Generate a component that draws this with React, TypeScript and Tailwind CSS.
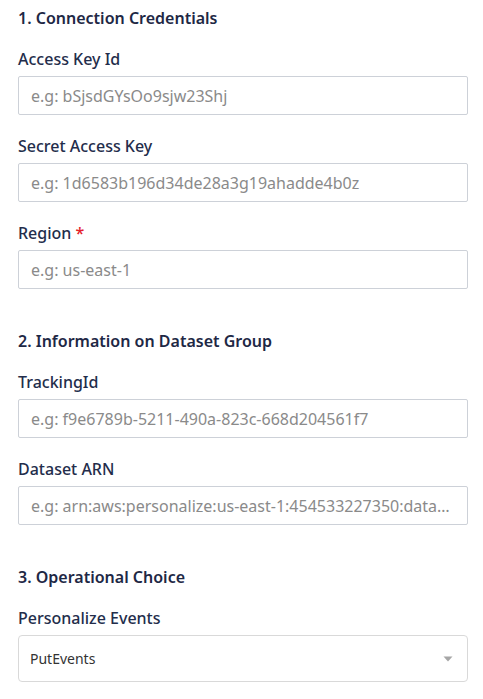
import React from "react";

const font = { fontFamily: '"Noto Sans", "Open Sans", sans-serif' };

function Field({ label, placeholder, required }: { label: string; placeholder: string; required?: boolean }) {
  return (
    <div className="flex flex-col">
      <label className="text-[16px] leading-[24px] font-medium text-[#232d4b] mb-[5px]">
        {label}
        {required && <span className="text-[#e4202a]"> *</span>}
      </label>
      <input
        className="h-[39px] w-full border border-[#cdd1d8] rounded-[2px] pl-[12px] pr-[15px] text-[16px] text-[#333] placeholder:text-[#8a8a8a] outline-none text-ellipsis bg-white"
        placeholder={placeholder}
      />
    </div>
  );
}

function Heading({ children }: { children: React.ReactNode }) {
  return <h2 className="text-[16px] leading-[24px] font-semibold text-[#1e2845]">{children}</h2>;
}

export default function App() {
  return (
    <div style={font} className="w-[483px] min-h-[699px] bg-white pt-[6px] pl-[18px] pr-[15px] pb-[16px]">
      <div className="flex flex-col">
        <Heading>1. Connection Credentials</Heading>
        <div className="flex flex-col gap-[19px] mt-[17px]">
          <Field label="Access Key Id" placeholder="e.g: bSjsdGYsOo9sjw23Shj" />
          <Field label="Secret Access Key" placeholder="e.g: 1d6583b196d34de28a3g19ahadde4b0z" />
          <Field label="Region" required placeholder="e.g: us-east-1" />
        </div>
      </div>
      <div className="flex flex-col mt-[40px]">
        <Heading>2. Information on Dataset Group</Heading>
        <div className="flex flex-col gap-[19px] mt-[17px]">
          <Field label="TrackingId" placeholder="e.g: f9e6789b-5211-490a-823c-668d204561f7" />
          <Field
            label="Dataset ARN"
            placeholder="e.g: arn:aws:personalize:us-east-1:454533227350:dataset-group/demo"
          />
        </div>
      </div>
      <div className="flex flex-col mt-[40px]">
        <Heading>3. Operational Choice</Heading>
        <div className="flex flex-col mt-[17px]">
          <label className="text-[16px] leading-[24px] font-medium text-[#232d4b] mb-[5px]">Personalize Events</label>
          <div className="h-[47px] w-full border border-[#d9d9d9] rounded-[4px] flex items-center justify-between pl-[11px] pr-[14px] bg-white">
            <span className="text-[14px] text-[#333]">PutEvents</span>
            <svg width="10" height="6" viewBox="0 0 10 6">
              <path d="M0.5 0.5 L9.5 0.5 L5 5.5 Z" fill="#a6a6a6" />
            </svg>
          </div>
        </div>
      </div>
    </div>
  );
}
